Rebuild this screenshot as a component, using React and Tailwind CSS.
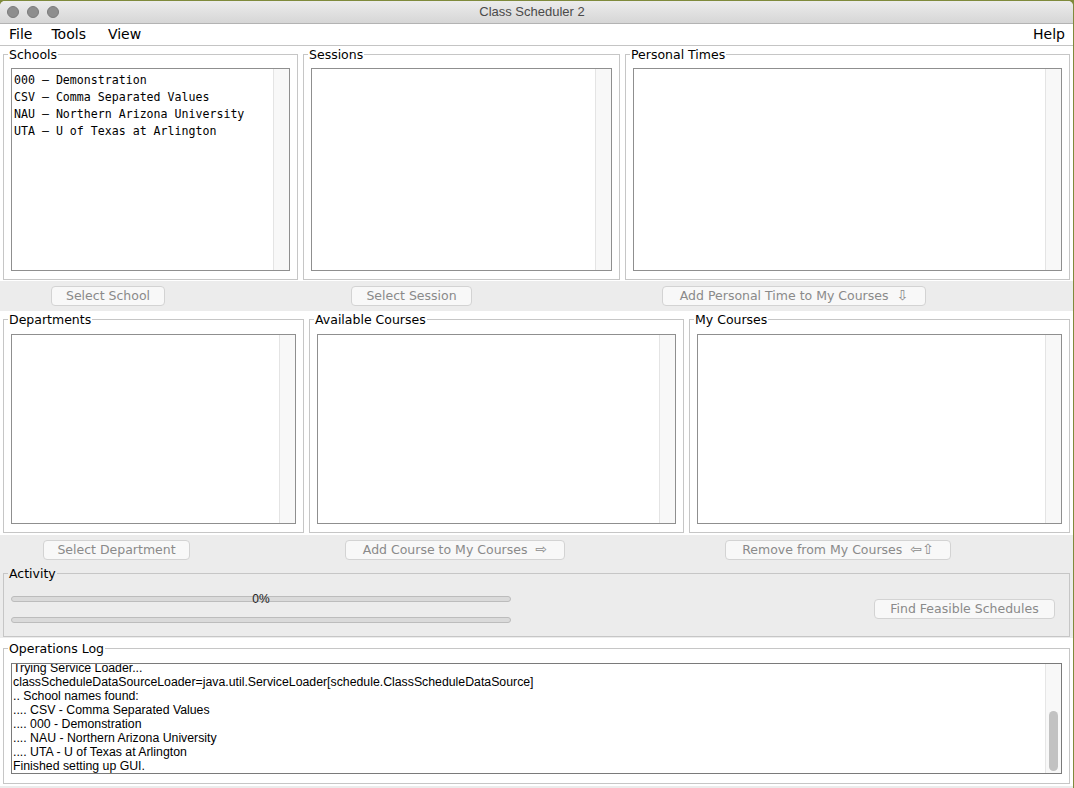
import React from 'react';

const ui = { fontFamily: '"DejaVu Sans", "Liberation Sans", sans-serif' };
const mono = { fontFamily: '"DejaVu Sans Mono", "Liberation Mono", monospace' };
const sans = { fontFamily: '"Liberation Sans", Arial, sans-serif' };

const Panel = ({ title, className = '', children }) => (
  <fieldset className={`min-w-0 border border-[#c6c6c6] px-[7px] pb-[8px] pt-[6px] flex flex-col ${className}`}>
    <legend className="ml-[-3px] px-[1px] text-[12.5px] leading-[15px] text-black" style={ui}>
      {title}
    </legend>
    {children}
  </fieldset>
);

const ListBox = ({ items = [] }) => (
  <div className="flex min-h-0 flex-1 border border-[#8f8f8f] bg-white">
    <div className="flex-1 pl-[2px] pt-[3px] text-[11.6px] leading-[17px] text-black" style={mono}>
      {items.map((it) => (
        <div key={it} className="whitespace-pre">{it}</div>
      ))}
    </div>
    <div className="w-[16px] border-l border-[#e4e4e4] bg-[#f8f8f8]" />
  </div>
);

const Btn = ({ children, className = '' }) => (
  <button
    className={`h-[20px] shrink-0 rounded-[4px] border border-[#d3d3d3] bg-[#f8f8f8] text-center text-[12.5px] leading-[18px] text-[#8a8a8a] ${className}`}
    style={ui}
  >
    {children}
  </button>
);

const Arrow = ({ children }) => <span className="ml-[8px] text-[14px] leading-none">{children}</span>;

const logLines = [
  'Trying Service Loader...',
  'classScheduleDataSourceLoader=java.util.ServiceLoader[schedule.ClassScheduleDataSource]',
  '.. School names found:',
  '.... CSV - Comma Separated Values',
  '.... 000 - Demonstration',
  '.... NAU - Northern Arizona University',
  '.... UTA - U of Texas at Arlington',
  'Finished setting up GUI.',
];

export default function App() {
  return (
    <div className="h-[788px] w-[1074px] overflow-hidden bg-[#7f8a3c]">
      <div className="mt-px flex h-[787px] w-[1073px] flex-col overflow-hidden rounded-t-[5px] bg-[#ececec]">
        {/* title bar */}
        <div className="relative flex h-[23px] shrink-0 items-center border-b border-[#b3b3b3] bg-gradient-to-b from-[#ececec] to-[#d6d6d6]">
          <div className="flex gap-[8px] pl-[7px]">
            <span className="h-[12px] w-[12px] rounded-full border border-[#7b7b7b] bg-[#8e8e8e]" />
            <span className="h-[12px] w-[12px] rounded-full border border-[#7b7b7b] bg-[#8e8e8e]" />
            <span className="h-[12px] w-[12px] rounded-full border border-[#7b7b7b] bg-[#8e8e8e]" />
          </div>
          <div className="flex-1 pr-[68px] text-center text-[13px] text-[#4a4a4a]" style={sans}>
            Class Scheduler 2
          </div>
        </div>

        {/* menu bar */}
        <div className="flex h-[22px] shrink-0 items-center border-b border-[#c4c4c4] bg-white text-[14px] text-black" style={ui}>
          <span className="ml-[9px]">File</span>
          <span className="ml-[19px]">Tools</span>
          <span className="ml-[22px]">View</span>
          <span className="ml-auto mr-[8px]">Help</span>
        </div>

        {/* row 1 */}
        <div className="flex h-[235px] shrink-0 gap-[5px] bg-white px-[3px] pb-[1px] pt-[1px]">
          <Panel title="Schools" className="w-[295px]">
            <ListBox
              items={[
                '000 – Demonstration',
                'CSV – Comma Separated Values',
                'NAU – Northern Arizona University',
                'UTA – U of Texas at Arlington',
              ]}
            />
          </Panel>
          <Panel title="Sessions" className="w-[317px]">
            <ListBox />
          </Panel>
          <Panel title="Personal Times" className="flex-1">
            <ListBox />
          </Panel>
        </div>

        <div className="flex h-[30px] shrink-0 items-center">
          <Btn className="ml-[51px] w-[114px]">Select School</Btn>
          <Btn className="ml-[186px] w-[121px]">Select Session</Btn>
          <Btn className="ml-[190px] w-[264px]">
            Add Personal Time to My Courses<Arrow>⇩</Arrow>
          </Btn>
        </div>

        {/* row 2 */}
        <div className="flex h-[224px] shrink-0 gap-[5px] bg-white px-[3px] pb-[2px] pt-[1px]">
          <Panel title="Departments" className="w-[301px] !pt-[7px]">
            <ListBox />
          </Panel>
          <Panel title="Available Courses" className="w-[375px] !pt-[7px]">
            <ListBox />
          </Panel>
          <Panel title="My Courses" className="flex-1 !pt-[7px]">
            <ListBox />
          </Panel>
        </div>

        <div className="flex h-[31px] shrink-0 items-center pb-[2px]">
          <Btn className="ml-[43px] w-[147px]">Select Department</Btn>
          <Btn className="ml-[155px] w-[220px]">
            Add Course to My Courses<Arrow>⇨</Arrow>
          </Btn>
          <Btn className="ml-[160px] w-[226px]">
            Remove from My Courses<Arrow>⇦⇧</Arrow>
          </Btn>
        </div>

        {/* activity */}
        <div className="flex h-[72px] shrink-0 px-[3px] pb-[1px]">
          <Panel title="Activity" className="flex-1 !pt-0">
            <div className="flex items-start">
              <div className="w-[500px] pt-[15px]">
                <div className="relative h-[6px] rounded-full border border-[#bcbcbc] bg-[#dadada]">
                  <span className="absolute left-1/2 top-[-5px] -translate-x-1/2 text-[12px] leading-[14px] text-[#222]" style={sans}>
                    0%
                  </span>
                </div>
                <div className="mt-[15px] h-[6px] rounded-full border border-[#bcbcbc] bg-[#dadada]" />
              </div>
              <Btn className="ml-auto mr-[7px] mt-[18px] w-[181px]">Find Feasible Schedules</Btn>
            </div>
          </Panel>
        </div>

        {/* operations log */}
        <div className="flex h-[148px] shrink-0 bg-white px-[3px] pb-[2px] pt-[3px]">
          <Panel title="Operations Log" className="flex-1 !pb-[9px] !pt-[7px]">
            <div className="flex min-h-0 flex-1 border border-[#7a7a7a] bg-white">
              <div className="flex-1 overflow-hidden pl-[1px]">
                <div className="-mt-[3px] text-[12.3px] leading-[14px] text-black" style={sans}>
                  {logLines.map((l) => (
                    <div key={l} className="whitespace-pre">{l}</div>
                  ))}
                </div>
              </div>
              <div className="flex w-[16px] flex-col border-l border-[#e6e6e6] bg-[#f8f8f8] px-[3px] pt-[47px] pb-[2px]">
                <div className="flex-1 rounded-full bg-[#c2c2c2]" />
              </div>
            </div>
          </Panel>
        </div>
        <div className="flex-1 bg-[#ececec]" />
      </div>
    </div>
  );
}
